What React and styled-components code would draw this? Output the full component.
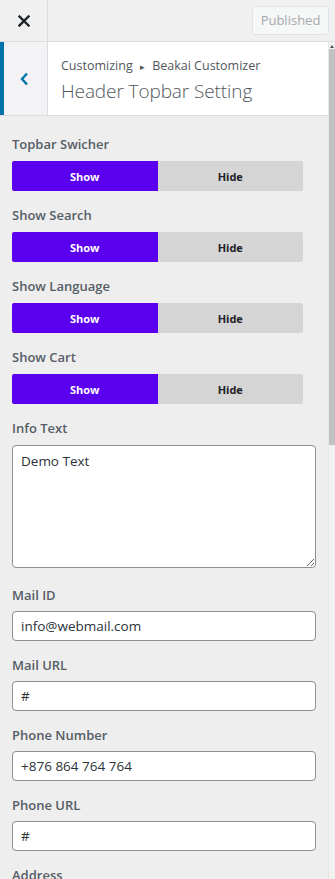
import React from 'react';
import styled, { createGlobalStyle } from 'styled-components';

const GlobalStyle = createGlobalStyle`
  html, body { margin: 0; padding: 0; }
  body {
    background: #eeeeee;
    font-family: "Open Sans", "Noto Sans", sans-serif;
    color: #50575e;
  }
  * { box-sizing: border-box; }
`;

const toggles = [
  { id: 'topbar', label: 'Topbar Swicher' },
  { id: 'search', label: 'Show Search' },
  { id: 'language', label: 'Show Language' },
  { id: 'cart', label: 'Show Cart' },
];

const fields = [
  { id: 'mail', label: 'Mail ID', value: 'info@webmail.com' },
  { id: 'mailurl', label: 'Mail URL', value: '#' },
  { id: 'phone', label: 'Phone Number', value: '+876 864 764 764' },
  { id: 'phoneurl', label: 'Phone URL', value: '#' },
];

const CloseIcon = () => (
  <svg width="12" height="12" viewBox="0 0 12 12">
    <path d="M1.5 1.5 L10.5 10.5 M10.5 1.5 L1.5 10.5" stroke="#1d2327" strokeWidth="2.4" strokeLinecap="square" />
  </svg>
);

const BackIcon = () => (
  <svg width="9" height="14" viewBox="0 0 9 14">
    <path d="M7 1.5 L2 7 L7 12.5" stroke="#0073aa" strokeWidth="2.4" fill="none" />
  </svg>
);

const App = () => {
  return (
    <Page>
      <GlobalStyle />
      <TopBar>
        <CloseButton>
          <CloseIcon />
        </CloseButton>
        <PublishButton>Published</PublishButton>
      </TopBar>
      <Body>
        <Panel>
          <SectionHeader>
            <BackButton>
              <BackIcon />
            </BackButton>
            <SectionTitle>
              <Breadcrumb>
                Customizing <Arrow>▸</Arrow> Beakai Customizer
              </Breadcrumb>
              <Heading>Header Topbar Setting</Heading>
            </SectionTitle>
          </SectionHeader>
          <Controls>
            {toggles.map((t) => (
              <Control key={t.id}>
                <Label>{t.label}</Label>
                <Toggle>
                  <ToggleOption $active>Show</ToggleOption>
                  <ToggleOption>Hide</ToggleOption>
                </Toggle>
              </Control>
            ))}
            <Control $extra={3}>
              <Label>Info Text</Label>
              <TextArea defaultValue="Demo Text" />
            </Control>
            {fields.map((f) => (
              <Control key={f.id}>
                <Label>{f.label}</Label>
                <Input defaultValue={f.value} />
              </Control>
            ))}
            <Control>
              <Label>Address</Label>
            </Control>
          </Controls>
        </Panel>
        <ScrollTrack>
          <ScrollArrow />
          <ScrollThumb />
        </ScrollTrack>
      </Body>
    </Page>
  );
};

export default App;

const Page = styled.div`
  width: 335px;
  height: 879px;
  overflow: hidden;
  display: flex;
  flex-direction: column;
  background: #eeeeee;
`;

const TopBar = styled.div`
  height: 42px;
  flex: none;
  display: flex;
  align-items: center;
  justify-content: space-between;
  background: #f0f0f1;
  border-bottom: 1px solid #dcdcde;
  padding-right: 6px;
`;

const CloseButton = styled.div`
  width: 48px;
  height: 41px;
  display: flex;
  align-items: center;
  justify-content: center;
  border-right: 1px solid #dcdcde;
`;

const PublishButton = styled.div`
  width: 77px;
  height: 29px;
  margin-top: -1px;
  display: flex;
  align-items: center;
  justify-content: center;
  background: #f6f7f7;
  border: 1px solid #e2e3e5;
  border-radius: 3px;
  color: #a7aaad;
  font-size: 13px;
`;

const Body = styled.div`
  flex: 1;
  display: flex;
  min-height: 0;
`;

const Panel = styled.div`
  flex: 1;
  min-width: 0;
`;

const SectionHeader = styled.div`
  height: 74px;
  display: flex;
  background: #fff;
  border-bottom: 1px solid #dcdcde;
`;

const BackButton = styled.div`
  width: 48px;
  display: flex;
  align-items: center;
  justify-content: center;
  background: #f3f3f5;
  border-left: 4px solid #0073aa;
  border-right: 1px solid #dcdcde;
  padding-right: 3px;
`;

const SectionTitle = styled.div`
  padding: 14px 0 0 13px;
  display: flex;
  flex-direction: column;
`;

const Breadcrumb = styled.div`
  font-size: 12.5px;
  line-height: 20px;
  color: #50575e;
`;

const Arrow = styled.span`
  font-size: 9px;
  margin: 0 4px;
`;

const Heading = styled.div`
  font-size: 19px;
  line-height: 29px;
  font-weight: 300;
  color: #50575e;
  letter-spacing: -0.1px;
`;

const Controls = styled.div`
  padding: 18px 12px 0 12px;
`;

const Control = styled.div`
  margin-bottom: ${(p) => 14 + (p.$extra || 0)}px;
`;

const Label = styled.div`
  font-size: 13px;
  font-weight: 600;
  line-height: 20px;
  color: #555d66;
  margin-bottom: 7px;
`;

const Toggle = styled.div`
  width: 291px;
  height: 30px;
  display: flex;
  border-radius: 2px;
  overflow: hidden;
`;

const ToggleOption = styled.div`
  flex: 1;
  display: flex;
  align-items: center;
  justify-content: center;
  font-size: 11px;
  font-weight: 700;
  background: ${(p) => (p.$active ? '#5b00ef' : '#d5d5d5')};
  color: ${(p) => (p.$active ? '#fff' : '#1d2327')};
`;

const TextArea = styled.textarea`
  display: block;
  width: 304px;
  height: 123px;
  margin-top: 1px;
  padding: 6px 8px;
  border: 1px solid #8c8f94;
  border-radius: 4px;
  background: #fff;
  font-family: "Open Sans", "Noto Sans", sans-serif;
  font-size: 13.5px;
  line-height: 18px;
  color: #2c3338;
  resize: vertical;
  outline: none;
`;

const Input = styled.input`
  display: block;
  width: 304px;
  height: 30px;
  margin-top: -1px;
  padding: 0 8px;
  border: 1px solid #8c8f94;
  border-radius: 4px;
  background: #fff;
  font-family: "Open Sans", "Noto Sans", sans-serif;
  font-size: 13.5px;
  color: #2c3338;
  outline: none;
`;

const ScrollTrack = styled.div`
  width: 7px;
  flex: none;
  display: flex;
  flex-direction: column;
  align-items: stretch;
  background: #f1f1f1;
  border-left: 1px solid #e6e6e6;
`;

const ScrollArrow = styled.div`
  height: 4px;
  margin: 2px 1px 0;
  border-left: 2px solid transparent;
  border-right: 2px solid transparent;
  border-bottom: 3px solid #505050;
  width: 0;
  align-self: center;
`;

const ScrollThumb = styled.div`
  height: 396px;
  margin-top: 1px;
  background: #c1c1c1;
`;
